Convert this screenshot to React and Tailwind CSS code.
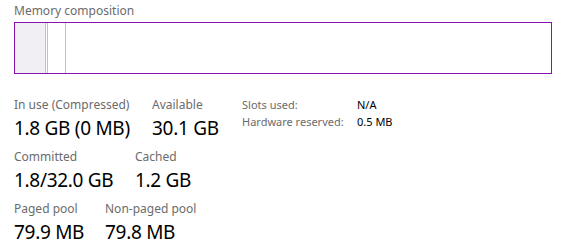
export default function App() {
  const Stat = ({ label, value, w }) => (
    <div className="flex flex-col whitespace-nowrap" style={{ width: w }}>
      <div className="text-[12px] leading-[16px] text-[#6b6b6b]">{label}</div>
      <div className="mt-[3px] text-[19px] leading-[24px] text-black tracking-[-0.3px]">{value}</div>
    </div>
  );
  return (
    <div className="w-[562px] h-[250px] bg-white overflow-hidden px-[14px] pt-[3px] font-['Noto_Sans',sans-serif]">
      <div className="text-[12px] leading-[16px] text-[#6b6b6b]">Memory composition</div>
      <div className="mt-[3px] w-[538px] h-[52px] border border-[#8b12ae] flex">
        <div className="w-[31px] h-full bg-[#f2eff4] border-r border-[#d3b0e0]" />
        <div className="w-[2px] h-full border-r border-[#d3b0e0]" />
        <div className="w-[18px] h-full border-r border-[#d3b0e0]" />
        <div className="flex-1" />
      </div>
      <div className="mt-[23px] flex">
        <div className="flex flex-col gap-[9px]">
          <div className="flex gap-[21px]">
            <Stat label="In use (Compressed)" value="1.8 GB (0 MB)" w={117} />
            <Stat label="Available" value="30.1 GB" w={90} />
          </div>
          <div className="flex gap-[21px]">
            <Stat label="Committed" value="1.8/32.0 GB" w={100} />
            <Stat label="Cached" value="1.2 GB" w={60} />
          </div>
          <div className="flex gap-[21px]">
            <Stat label="Paged pool" value="79.9 MB" w={70} />
            <Stat label="Non-paged pool" value="79.8 MB" w={90} />
          </div>
        </div>
        <div className="flex flex-col gap-[1px] text-[11px] leading-[16px]">
          <div className="flex"><span className="w-[115px] text-[#6b6b6b]">Slots used:</span><span className="text-black">N/A</span></div>
          <div className="flex"><span className="w-[115px] text-[#6b6b6b]">Hardware reserved:</span><span className="text-black">0.5 MB</span></div>
        </div>
      </div>
    </div>
  );
}
